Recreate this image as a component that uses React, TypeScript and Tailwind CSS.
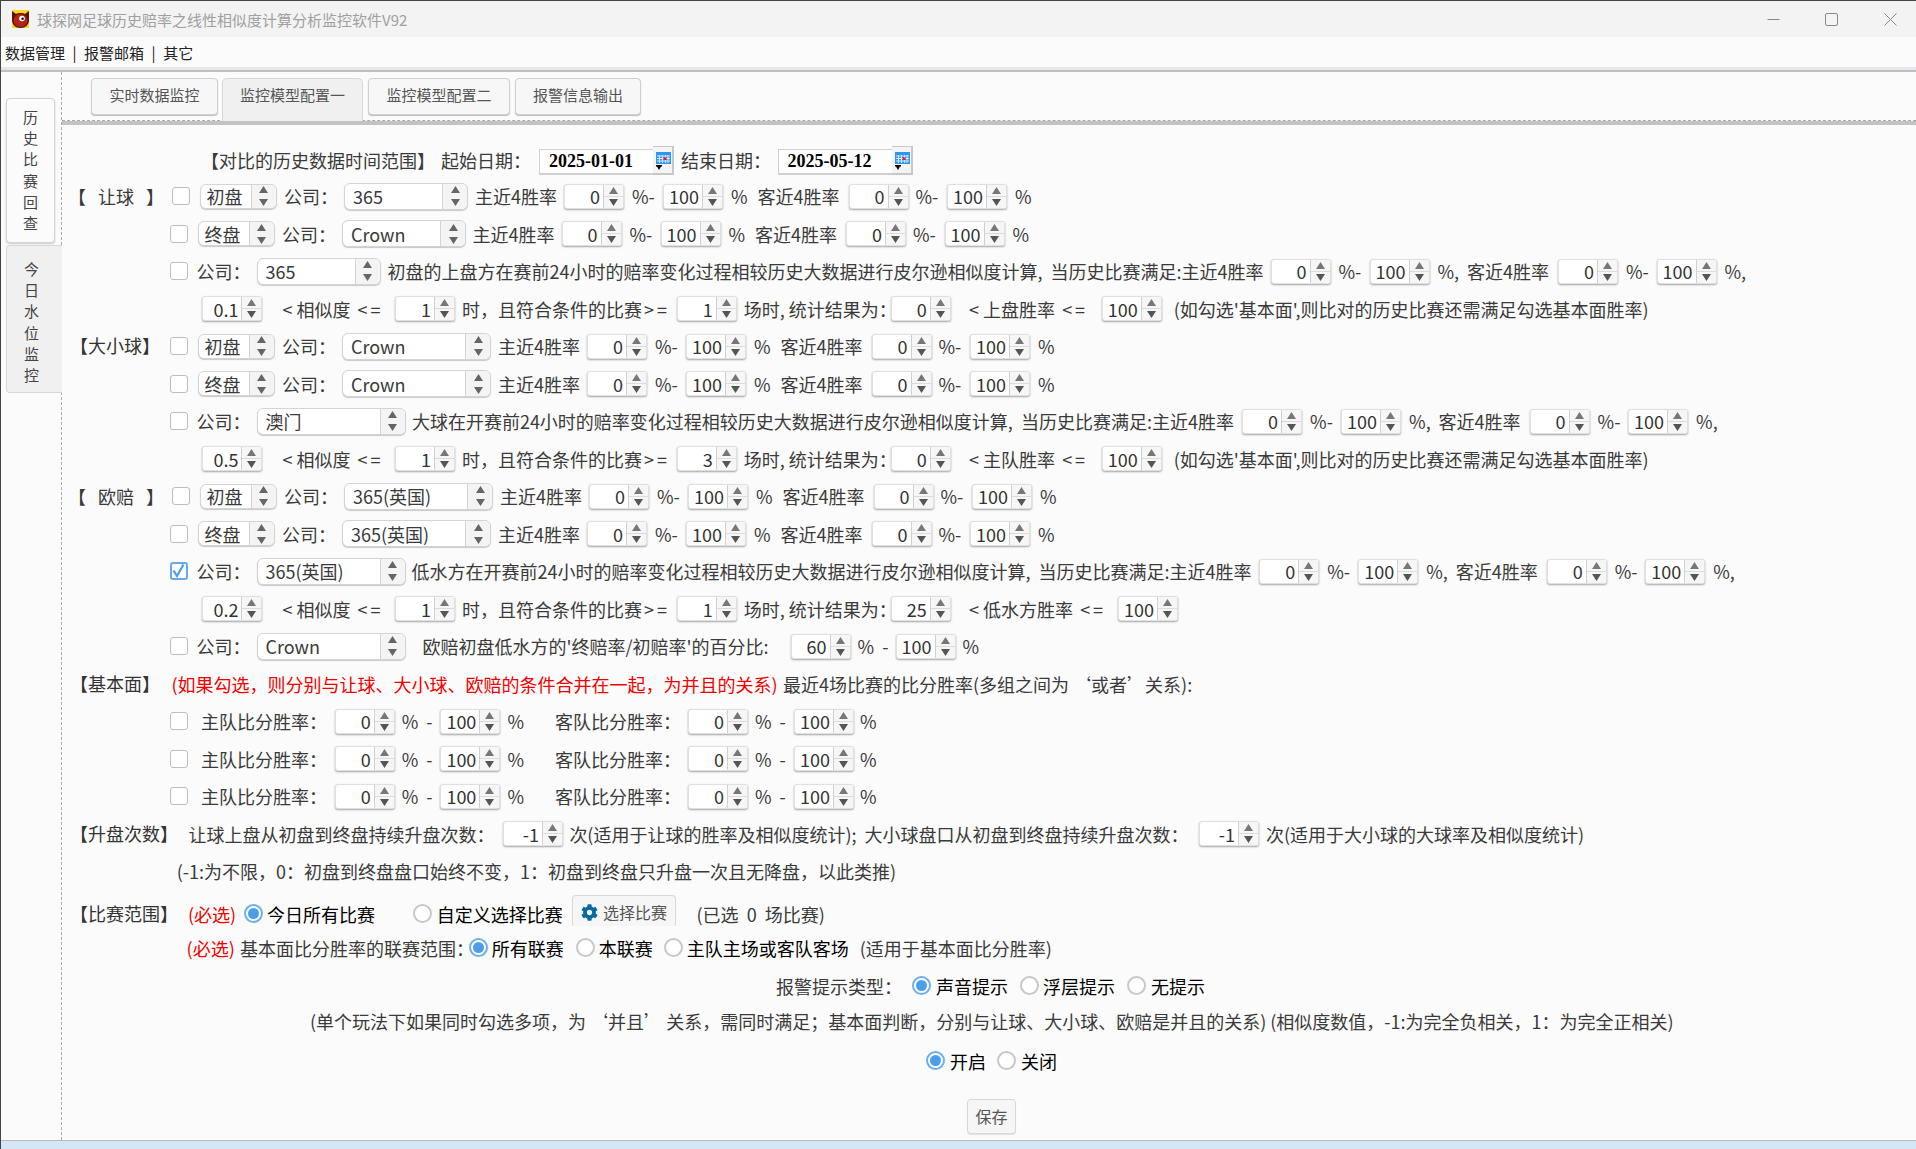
import type { ReactNode } from "react";
import { FaCog } from "react-icons/fa";

function T({ className = "", children }: { className?: string; children: ReactNode }) {
  return <span className={`shrink-0 whitespace-pre text-[18px] leading-none text-[#3a3a3a] ${className}`}>{children}</span>;
}

function Row({ className = "", children }: { className?: string; children: ReactNode }) {
  return <div className={`flex h-[37.5px] items-center ${className}`}>{children}</div>;
}

function UpDown({ size = 7 }: { size?: number }) {
  return (
    <svg width={size + 2} height="22" viewBox="0 0 9 22" fill="#666">
      <path d="M4.5 1 9 8H0z" />
      <path d="M4.5 21 0 14h9z" />
    </svg>
  );
}

function Spin({ value }: { value: string }) {
  return (
    <div className="flex h-[25px] w-[60px] shrink-0 rounded-[3px] border border-[#e0e0e0] bg-white shadow-[0_1px_2px_rgba(0,0,0,0.35)]">
      <div className="flex flex-1 items-center justify-end pr-[3px] text-[18px] leading-none text-[#333]">{value}</div>
      <div className="flex w-[20px] flex-col border-l border-[#d0d0d0] bg-[#f6f6f6]">
        <div className="flex flex-1 items-center justify-center border-b border-[#dcdcdc]">
          <svg width="9" height="7" viewBox="0 0 9 7" fill="#777">
            <path d="M4.5 0 9 7H0z" />
          </svg>
        </div>
        <div className="flex flex-1 items-center justify-center">
          <svg width="9" height="7" viewBox="0 0 9 7" fill="#555">
            <path d="M4.5 7 0 0h9z" />
          </svg>
        </div>
      </div>
    </div>
  );
}

function Select({ value, className = "", text = "pl-[8px]" }: { value: string; className?: string; text?: string }) {
  return (
    <div className={`flex shrink-0 rounded-[6px] border border-[#d4d4d4] bg-white shadow-[0_1px_1px_rgba(0,0,0,0.2)] ${className}`}>
      <div className={`flex flex-1 items-center text-[18px] leading-none text-[#3a3a3a] ${text}`}>{value}</div>
      <div className="flex w-[25px] items-center justify-center rounded-r-[6px] border-l border-[#d4d4d4] bg-[#f4f4f4]">
        <UpDown />
      </div>
    </div>
  );
}

function Pan({ value }: { value: string }) {
  return <Select value={value} className="h-[25px] w-[77px]" text="pl-[6px]" />;
}

function Company({ value, wide = false }: { value: string; wide?: boolean }) {
  return <Select value={value} className={wide ? "h-[27px] w-[149px]" : "h-[27px] w-[124px]"} />;
}

function Check({ checked = false }: { checked?: boolean }) {
  return (
    <div
      className={`flex h-[18px] w-[17.5px] shrink-0 items-center justify-center rounded-[3px] bg-white ${
        checked ? "border-2 border-[#69a9ea]" : "border border-[#bdbdbd]"
      }`}
    >
      {checked && (
        <svg width="13" height="14" viewBox="0 0 13 14" fill="none" stroke="#4a9fea" strokeWidth="2.2">
          <path d="M1.5 6.5 5 12 11.5 0.5" />
        </svg>
      )}
    </div>
  );
}

function Radio({ checked = false }: { checked?: boolean }) {
  return (
    <div
      className={`flex h-[19px] w-[19px] shrink-0 items-center justify-center rounded-full border-2 bg-white ${
        checked ? "border-[#6db0ec]" : "border-[#c8c8c8]"
      }`}
    >
      {checked && <div className="h-[11px] w-[11px] rounded-full bg-[#4c9eea]" />}
    </div>
  );
}

function Bracket({ children, className = "" }: { children: ReactNode; className?: string }) {
  return <T className={`text-[#333] ${className}`}>【{children}】</T>;
}

function Op({ children, className = "" }: { children: ReactNode; className?: string }) {
  return <span className={`tracking-[3px] ${className}`}>{children}</span>;
}

function RateGroup() {
  return (
    <>
      <T className="w-[89px]">主近4胜率</T>
      <Spin value="0" />
      <T className="w-[39px] pl-[8px]">%-</T>
      <Spin value="100" />
      <T className="w-[34.5px] pl-[8px]">%</T>
      <T className="w-[91px]">客近4胜率</T>
      <Spin value="0" />
      <T className="w-[38.5px] pl-[7px]">%-</T>
      <Spin value="100" />
      <T className="pl-[8px]">%</T>
    </>
  );
}

function TailGroup() {
  return (
    <>
      <Spin value="0" />
      <T className="w-[39px] pl-[8px]">%-</T>
      <Spin value="100" />
      <T className="w-[37.5px] pl-[8px]">%,</T>
      <T className="w-[91px]">客近4胜率</T>
      <Spin value="0" />
      <T className="w-[38.5px] pl-[8px]">%-</T>
      <Spin value="100" />
      <T className="pl-[8px]">%,</T>
    </>
  );
}

function SimRow({ a, b, c, d, e, wide = false }: { a: string; b: string; c: string; d: string; e: string; wide?: boolean }) {
  return (
    <Row className="pl-[140.4px]">
      <Spin value={a} />
      <T className="w-[132.6px] pl-[20px]">
        {"< 相似度 "}
        <Op className="ml-[3px]">{"<="}</Op>
      </T>
      <Spin value={b} />
      <T className="w-[221.7px] pl-[7px]">
        时，且符合条件的比赛
        <Op className="ml-[2px]">{">="}</Op>
      </T>
      <Spin value={c} />
      <T className="w-[154px] pl-[7px]">场时, 统计结果为：</T>
      <Spin value={d} />
      <T className={wide ? "w-[167.4px] pl-[18.4px]" : "w-[151px] pl-[18.4px]"}>
        {`< ${e} `}
        <Op className="ml-[3px]">{"<="}</Op>
      </T>
      <Spin value="100" />
      {!wide && <T className="pl-[12px]">(如勾选'基本面',则比对的历史比赛还需满足勾选基本面胜率)</T>}
    </Row>
  );
}

function ScoreRow() {
  return (
    <Row className="pl-[108px]">
      <Check />
      <T className="ml-[13.5px] w-[133.7px]">主队比分胜率：</T>
      <Spin value="0" />
      <T className="w-[45.7px] pl-[7px]">{"%  -"}</T>
      <Spin value="100" />
      <T className="w-[54.6px] pl-[7px]">%</T>
      <T className="w-[133px]">客队比分胜率：</T>
      <Spin value="0" />
      <T className="w-[46px] pl-[7px]">{"%  -"}</T>
      <Spin value="100" />
      <T className="pl-[6px]">%</T>
    </Row>
  );
}

function DateField({ value }: { value: string }) {
  return (
    <div className="flex h-[29px] w-[135px] shrink-0 items-end">
      <div className="flex h-[26px] flex-1 items-center border-b-2 border-l border-t border-[#d0d0d0] bg-white pb-[1px] pl-[9px] text-[18px] leading-none font-bold text-black [font-family:'Liberation_Serif',serif]">
        {value}
      </div>
      <div className="flex h-[29px] w-[21px] flex-col border-b-2 border-r-2 border-t border-[#c8c8c8] bg-[#f4f4f4] pl-[3px] pt-[5px]">
        <svg width="15" height="19" viewBox="0 0 15 19">
          <rect x="0" y="0" width="15" height="12" fill="#2f95ee" />
          <path d="M1 4h13M1 6.5h13M1 9h13M3.5 3v8M6.5 3v8M9.5 3v8M12 3v8" stroke="#cfe6fb" strokeWidth="1" />
          <rect x="7.5" y="5.5" width="3" height="2.5" fill="#ec1c24" />
          <path d="M0 13h6v1.5H5L3 18 1 14.5H0z" fill="#000" />
        </svg>
      </div>
    </div>
  );
}

function TopTab({ children, className = "", active = false }: { children: ReactNode; className?: string; active?: boolean }) {
  return (
    <div
      className={`flex shrink-0 items-center justify-center text-[15px] leading-none text-[#555] ${
        active
          ? "relative z-10 -mb-px h-[43px] rounded-t-[5px] border-x border-t border-[#d8d8d8] bg-[#f0f0f0] pb-[11px]"
          : "h-[37px] rounded-[4px] border border-[#d0d0d0] bg-[#f7f7f7] pb-[5px] shadow-[0_1px_1px_rgba(0,0,0,0.25)]"
      } ${className}`}
    >
      {children}
    </div>
  );
}

function SideTab({ chars, className = "" }: { chars: string[]; className?: string }) {
  return (
    <div className={`flex flex-col items-center text-[15px] leading-[21.2px] text-[#444] ${className}`}>
      {chars.map((c, i) => (
        <span key={i}>{c}</span>
      ))}
    </div>
  );
}

export default function App() {
  return (
    <div className="flex h-[1149px] w-[1916px] flex-col overflow-hidden border-l border-t border-[#444] bg-[#fbfbfb] [font-family:'Noto_Sans_CJK_SC','Noto_Sans',sans-serif]">
      {/* title bar */}
      <div className="flex h-[36px] shrink-0 items-center bg-[#f3f3f3]">
        <svg className="ml-[11px]" width="17" height="18" viewBox="0 0 17 18">
          <rect width="17" height="18" fill="#f7d520" />
          <path d="M0 1 4 4c2-1.2 7-1.2 9 0l4-3v9c0 4.500-3.500 8-8.500 8S0 14.500 0 10z" fill="#5a130a" />
          <ellipse cx="8.500" cy="10.500" rx="7" ry="6.500" fill="#b3241a" />
          <circle cx="10" cy="8.500" r="2.800" fill="#fff" />
          <circle cx="10.600" cy="8.800" r="1.300" fill="#111" />
        </svg>
        <span className="ml-[8px] text-[15px] leading-none text-[#a0a0a0]">球探网足球历史赔率之线性相似度计算分析监控软件V92</span>
        <div className="ml-auto flex items-center pr-[19px]">
          <svg width="13" height="13" viewBox="0 0 13 13" stroke="#8a8a8a" fill="none" className="mr-[45px]">
            <path d="M0.5 6.500h12" />
          </svg>
          <svg width="13" height="13" viewBox="0 0 13 13" stroke="#8a8a8a" fill="none" className="mr-[46px]">
            <rect x="0.500" y="0.500" width="12" height="12" rx="1.500" />
          </svg>
          <svg width="13" height="13" viewBox="0 0 13 13" stroke="#8a8a8a" fill="none">
            <path d="M0.500 0.500 12.500 12.500M12.500 0.500 0.500 12.500" />
          </svg>
        </div>
      </div>

      {/* menu */}
      <div className="flex h-[30px] shrink-0 items-center gap-[7.5px] bg-[#fbfbfb] pl-[4px] text-[15px] leading-none text-[#222]">
        <span>数据管理</span>
        <span>|</span>
        <span>报警邮箱</span>
        <span>|</span>
        <span>其它</span>
      </div>
      <div className="h-[3px] shrink-0 bg-[#e3e8ec]" />
      <div className="h-[2px] shrink-0 bg-[#c0c0c0]" />

      <div className="flex min-h-0 flex-1">
        {/* left tabs */}
        <div className="flex w-[61px] shrink-0 flex-col border-r border-dashed border-[#aaa] pl-[5px] pt-[26px]">
          <SideTab
            chars={["历", "史", "比", "赛", "回", "查"]}
            className="h-[145px] w-[49px] justify-center rounded-[4px] border border-[#d4d4d4] bg-[#fbfbfb] pb-[2px] shadow-[0_1px_2px_rgba(0,0,0,0.2)]"
          />
          <SideTab
            chars={["今", "日", "水", "位", "监", "控"]}
            className="relative z-10 mt-[2px] h-[148px] w-[56px] justify-center rounded-l-[4px] border-y border-l border-[#d8d8d8] bg-[#f0f0f0] pr-[6px] pt-[5px]"
          />
        </div>

        <div className="flex min-w-0 flex-1 flex-col">
          {/* top tabs */}
          <div className="flex h-[49px] shrink-0 items-start border-b border-dashed border-[#aaa] pl-[29px] pt-[6px]">
            <TopTab className="w-[127px]">实时数据监控</TopTab>
            <TopTab active className="ml-[4px] w-[141px]">
              监控模型配置一
            </TopTab>
            <TopTab className="ml-[5px] w-[142px]">监控模型配置二</TopTab>
            <TopTab className="ml-[5px] w-[126px]">报警信息输出</TopTab>
          </div>
          <div className="h-[4px] shrink-0 bg-[#c3c3c3]" />

          {/* form */}
          <div className="flex min-h-0 flex-1 flex-col pt-[18px]">
            <div className="flex h-[34.25px] items-center pl-[139px]">
              <T className="w-[240px]">【对比的历史数据时间范围】</T>
              <T className="w-[98px]">起始日期：</T>
              <DateField value="2025-01-01" />
              <T className="w-[103.5px] pl-[7px]">结束日期：</T>
              <DateField value="2025-05-12" />
            </div>

            <Row>
              <div className="flex w-[110px] shrink-0 items-center pl-[6px]">
                <T>【</T>
                <T className="ml-[12px]">让球</T>
                <T className="ml-[12px]">】</T>
              </div>
              <Check />
              <div className="ml-[10px] flex items-center">
                <Pan value="初盘" />
                <T className="ml-[7.5px] w-[60px]">公司：</T>
                <Company value="365" />
                <div className="w-[7px]" />
                <RateGroup />
              </div>
            </Row>
            <Row className="pl-[108px]">
              <Check />
              <div className="ml-[10px] flex items-center">
                <Pan value="终盘" />
                <T className="ml-[7.5px] w-[60px]">公司：</T>
                <Company value="Crown" />
                <div className="w-[6.5px]" />
                <RateGroup />
              </div>
            </Row>
            <Row className="pl-[108px]">
              <Check />
              <T className="ml-[9px] w-[60px]">公司：</T>
              <Company value="365" />
              <T className="ml-[7px] w-[883px]">初盘的上盘方在赛前24小时的赔率变化过程相较历史大数据进行皮尔逊相似度计算,  当历史比赛满足:主近4胜率</T>
              <TailGroup />
            </Row>
            <SimRow a="0.1" b="1" c="1" d="0" e="上盘胜率" />

            <Row>
              <div className="w-[108px] shrink-0 pl-[8px]">
                <Bracket>大小球</Bracket>
              </div>
              <Check />
              <div className="ml-[10px] flex items-center">
                <Pan value="初盘" />
                <T className="ml-[7.5px] w-[60px]">公司：</T>
                <Company wide value="Crown" />
                <div className="w-[7px]" />
                <RateGroup />
              </div>
            </Row>
            <Row className="pl-[108px]">
              <Check />
              <div className="ml-[10px] flex items-center">
                <Pan value="终盘" />
                <T className="ml-[7.5px] w-[60px]">公司：</T>
                <Company wide value="Crown" />
                <div className="w-[7px]" />
                <RateGroup />
              </div>
            </Row>
            <Row className="pl-[108px]">
              <Check />
              <T className="ml-[9px] w-[60px]">公司：</T>
              <Company wide value="澳门" />
              <T className="ml-[6.4px] w-[830.2px]">大球在开赛前24小时的赔率变化过程相较历史大数据进行皮尔逊相似度计算,  当历史比赛满足:主近4胜率</T>
              <TailGroup />
            </Row>
            <SimRow a="0.5" b="1" c="3" d="0" e="主队胜率" />

            <Row>
              <div className="flex w-[110px] shrink-0 items-center pl-[6px]">
                <T>【</T>
                <T className="ml-[12px]">欧赔</T>
                <T className="ml-[12px]">】</T>
              </div>
              <Check />
              <div className="ml-[10px] flex items-center">
                <Pan value="初盘" />
                <T className="ml-[7.5px] w-[60px]">公司：</T>
                <Company wide value="365(英国)" />
                <div className="w-[7px]" />
                <RateGroup />
              </div>
            </Row>
            <Row className="pl-[108px]">
              <Check />
              <div className="ml-[10px] flex items-center">
                <Pan value="终盘" />
                <T className="ml-[7.5px] w-[60px]">公司：</T>
                <Company wide value="365(英国)" />
                <div className="w-[7px]" />
                <RateGroup />
              </div>
            </Row>
            <Row className="pl-[108px]">
              <Check checked />
              <T className="ml-[9px] w-[60px]">公司：</T>
              <Company wide value="365(英国)" />
              <T className="ml-[6px] w-[847.7px]">低水方在开赛前24小时的赔率变化过程相较历史大数据进行皮尔逊相似度计算,  当历史比赛满足:主近4胜率</T>
              <TailGroup />
            </Row>
            <SimRow a="0.2" b="1" c="1" d="25" e="低水方胜率" wide />
            <Row className="pl-[108px]">
              <Check />
              <T className="ml-[9px] w-[60px]">公司：</T>
              <Company wide value="Crown" />
              <T className="ml-[17px] w-[368px]">欧赔初盘低水方的'终赔率/初赔率'的百分比:</T>
              <Spin value="60" />
              <T className="w-[45px] pl-[7px]">{"%  -"}</T>
              <Spin value="100" />
              <T className="pl-[7px]">%</T>
            </Row>

            <Row>
              <div className="w-[109.4px] shrink-0 pl-[8px]">
                <Bracket>基本面</Bracket>
              </div>
              <T className="w-[611.6px] text-[#f00000]">(如果勾选，则分别与让球、大小球、欧赔的条件合并在一起，为并且的关系)</T>
              <T>最近4场比赛的比分胜率(多组之间为 ‘或者’关系):</T>
            </Row>
            <ScoreRow />
            <ScoreRow />
            <ScoreRow />

            <Row>
              <div className="w-[126.6px] shrink-0 pl-[8px]">
                <Bracket>升盘次数</Bracket>
              </div>
              <T className="w-[314.4px]">让球上盘从初盘到终盘持续升盘次数：</T>
              <Spin value="-1" />
              <T className="w-[636px] pl-[6.4px]">次(适用于让球的胜率及相似度统计);  大小球盘口从初盘到终盘持续升盘次数：</T>
              <Spin value="-1" />
              <T className="pl-[7px]">次(适用于大小球的大球率及相似度统计)</T>
            </Row>
            <Row className="pl-[114.7px]">
              <T>(-1:为不限，0：初盘到终盘盘口始终不变，1：初盘到终盘只升盘一次且无降盘，以此类推)</T>
            </Row>

            <div className="mt-[9px] flex h-[30px] items-center">
              <div className="w-[126px] shrink-0 pl-[8px]">
                <Bracket>比赛范围</Bracket>
              </div>
              <T className="w-[56px] text-[#f00000]">(必选)</T>
              <Radio checked />
              <T className="w-[150px] pl-[4px] text-black">今日所有比赛</T>
              <Radio />
              <T className="w-[140px] pl-[4.7px] text-black">自定义选择比赛</T>
              <div className="mb-[7px] flex h-[31px] w-[103.5px] shrink-0 items-center rounded-t-[4px] border-x border-t border-[#d8d8d8] bg-[#f6f6f6] pl-[8px] pt-[3px]">
                <FaCog className="h-[17px] w-[17px] text-[#0a6a9e]" />
                <span className="ml-[5px] text-[16px] leading-none text-[#555]">选择比赛</span>
              </div>
              <T className="pl-[21px]">(已选  0  场比赛)</T>
            </div>
            <div className="mt-[4px] flex h-[30px] items-center pl-[124.6px]">
              <T className="w-[53.4px] text-[#f00000]">(必选)</T>
              <T className="w-[228.7px]">基本面比分胜率的联赛范围：</T>
              <Radio checked />
              <T className="w-[88px] pl-[4px] text-black">所有联赛</T>
              <Radio />
              <T className="w-[69px] pl-[4px] text-black">本联赛</T>
              <Radio />
              <T className="w-[177px] pl-[4px] text-black">主队主场或客队客场</T>
              <T>(适用于基本面比分胜率)</T>
            </div>
            <div className="mt-[8px] flex h-[30px] items-center pl-[714px]">
              <T className="w-[136px]">报警提示类型：</T>
              <Radio checked />
              <T className="w-[89px] pl-[5px] text-black">声音提示</T>
              <Radio />
              <T className="w-[88px] pl-[4px] text-black">浮层提示</T>
              <Radio />
              <T className="pl-[5px] text-black">无提示</T>
            </div>
            <div className="mt-[5px] flex h-[30px] items-center pl-[248px]">
              <T>(单个玩法下如果同时勾选多项，为 ‘并且’ 关系，需同时满足；基本面判断，分别与让球、大小球、欧赔是并且的关系) (相似度数值，-1:为完全负相关，1：为完全正相关)</T>
            </div>
            <div className="mt-[10px] flex h-[30px] items-center pl-[864px]">
              <Radio checked />
              <T className="w-[52px] pl-[5px] text-black">开启</T>
              <Radio />
              <T className="pl-[5px] text-black">关闭</T>
            </div>
            <div className="mt-[23px] flex pl-[905px]">
              <button className="h-[35px] w-[49px] rounded-[4px] border border-[#d8d8d8] bg-[#f6f6f6] text-[16px] leading-none text-[#555] shadow-[0_1px_1px_rgba(0,0,0,0.1)]">
                保存
              </button>
            </div>
          </div>
        </div>
      </div>

      {/* taskbar sliver */}
      <div className="h-[9px] shrink-0 border-t border-[#b4bcc4] bg-[#d6e6f4]" />
    </div>
  );
}
